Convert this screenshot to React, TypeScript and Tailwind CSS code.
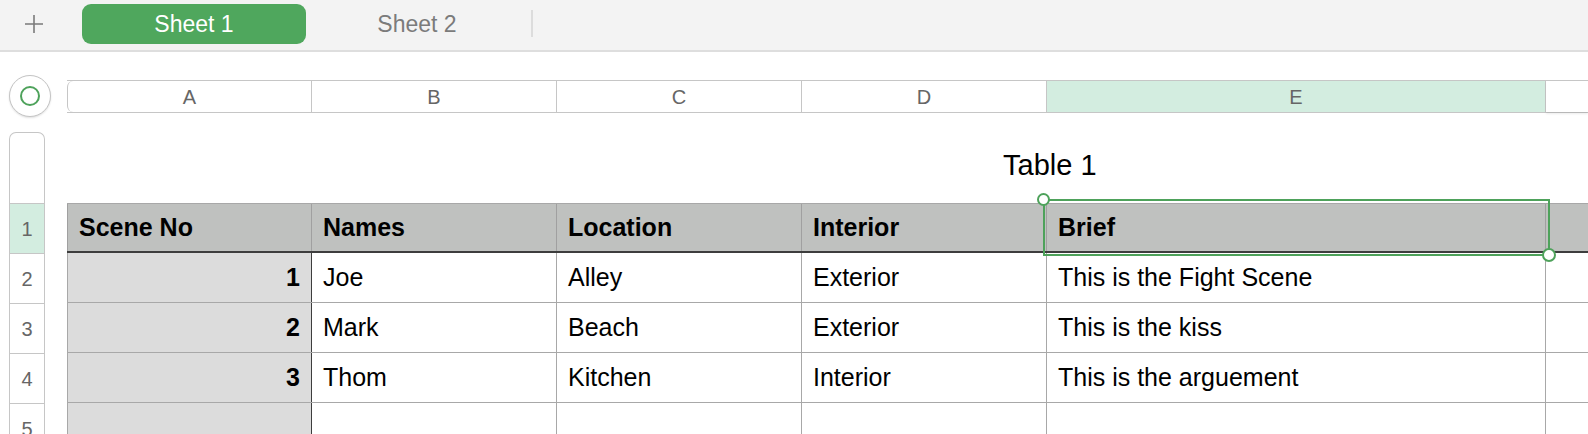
import React from 'react'

const cols = ['A', 'B', 'C', 'D', 'E']
const colWidths = ['w-[245px]', 'w-[245px]', 'w-[245px]', 'w-[245px]', 'w-[499px]']

const header = ['Scene No', 'Names', 'Location', 'Interior', 'Brief']
const rows = [
  ['1', 'Joe', 'Alley', 'Exterior', 'This is the Fight Scene'],
  ['2', 'Mark', 'Beach', 'Exterior', 'This is the kiss'],
  ['3', 'Thom', 'Kitchen', 'Interior', 'This is the arguement'],
  ['', '', '', '', ''],
]

const font = { fontFamily: '"Liberation Sans", Arial, Helvetica, sans-serif' }

function TopBar() {
  return (
    <div className="flex h-[52px] items-start bg-[#f3f3f3] border-b-2 border-[#dedede]">
      <div className="flex h-[48px] w-[68px] items-center justify-center">
        <svg width="20" height="20" viewBox="0 0 20 20" className="text-[#7a7a7a]">
          <path d="M10 1v18M1 10h18" stroke="currentColor" strokeWidth="1.6" />
        </svg>
      </div>
      <div className="ml-[14px] mt-[4px] flex h-[40px] w-[224px] items-center justify-center rounded-[9px] bg-[#4fa75d] text-[23px] text-white">
        Sheet 1
      </div>
      <div className="flex h-[48px] w-[222px] items-center justify-center text-[23px] text-[#7b7b7b]">
        Sheet 2
      </div>
      <div className="ml-[3px] mt-[10px] h-[27px] w-[2px] bg-[#dcdcdc]" />
    </div>
  )
}

function ColumnHeader() {
  return (
    <div className="mt-[28px] flex h-[33px] border-y border-[#c6c6c6] text-[20px] text-[#666]">
      {cols.map((c, i) => (
        <div
          key={c}
          className={`${colWidths[i]} flex shrink-0 items-center justify-center border-r border-[#c6c6c6] ${
            i === 0 ? 'rounded-l-[6px] border-l' : ''
          } ${c === 'E' ? 'bg-[#d3ede0]' : 'bg-white'}`}
        >
          {c}
        </div>
      ))}
      <div className="flex-1 bg-white shadow-[0_2px_2px_rgba(0,0,0,0.08)]" />
    </div>
  )
}

function RowHeader() {
  return (
    <div className="ml-[9px] mt-[15px] w-[36px] text-[20px] text-[#666]">
      <div className="h-[71px] rounded-t-[7px] border border-b-0 border-[#c6c6c6] bg-white" />
      {[1, 2, 3, 4, 5].map((n) => (
        <div
          key={n}
          className={`flex h-[50px] items-center justify-center border-x border-t border-[#c6c6c6] ${
            n === 1 ? 'bg-[#d3ede0]' : 'bg-white'
          }`}
        >
          {n}
        </div>
      ))}
    </div>
  )
}

function Table() {
  return (
    <div className="relative text-[25px] text-black">
      {/* header row */}
      <div className="flex h-[50px] border-t border-[#a8a8a8] border-b-2 border-b-[#3d3d3d] bg-[#bfc1bf] font-bold">
        {header.map((h, i) => (
          <div
            key={h}
            className={`${colWidths[i]} flex shrink-0 items-center px-[11px] border-r border-[#a0a0a0] ${
              i === 0 ? 'border-l' : ''
            }`}
          >
            {h}
          </div>
        ))}
        <div className="flex-1" />
      </div>
      {rows.map((r, ri) => (
        <div key={ri} className="flex h-[50px] border-b border-[#a8a8a8]">
          {r.map((cell, i) => (
            <div
              key={i}
              className={`${colWidths[i]} flex shrink-0 items-center px-[11px] border-r ${
                i === 0
                  ? 'justify-end border-l border-l-[#a8a8a8] border-r-[#3d3d3d] bg-[#dcdcdc] font-bold'
                  : 'border-[#a8a8a8] bg-white'
              }`}
            >
              {cell}
            </div>
          ))}
          <div className="flex-1 bg-white" />
        </div>
      ))}

      {/* selection */}
      <div className="pointer-events-none absolute left-[976px] top-[-4px] h-[57px] w-[507px] border-2 border-[#4ea25b]">
        <div className="absolute -left-[8px] -top-[8px] h-[13px] w-[13px] rounded-full border-2 border-[#4ea25b] bg-white" />
        <div className="absolute -bottom-[8px] -right-[8px] h-[14px] w-[14px] rounded-full border-2 border-[#4ea25b] bg-white" />
      </div>
    </div>
  )
}

export default function App() {
  return (
    <div className="h-[434px] w-full overflow-hidden bg-white" style={font}>
      <TopBar />
      <div className="flex">
        <div className="w-[67px] shrink-0">
          <div className="ml-[9px] mt-[23px] flex h-[42px] w-[42px] items-center justify-center rounded-full border border-[#c4c4c4] bg-white shadow-[0_1px_2px_rgba(0,0,0,0.12)]">
            <div className="h-[20px] w-[20px] rounded-full border-2 border-[#4ea25b]" />
          </div>
          <RowHeader />
        </div>
        <div className="min-w-0 flex-1">
          <ColumnHeader />
          <div className="h-[90px] pl-[936px] pt-[36px] text-[29px] leading-[32px] text-black">Table 1</div>
          <Table />
        </div>
      </div>
    </div>
  )
}
